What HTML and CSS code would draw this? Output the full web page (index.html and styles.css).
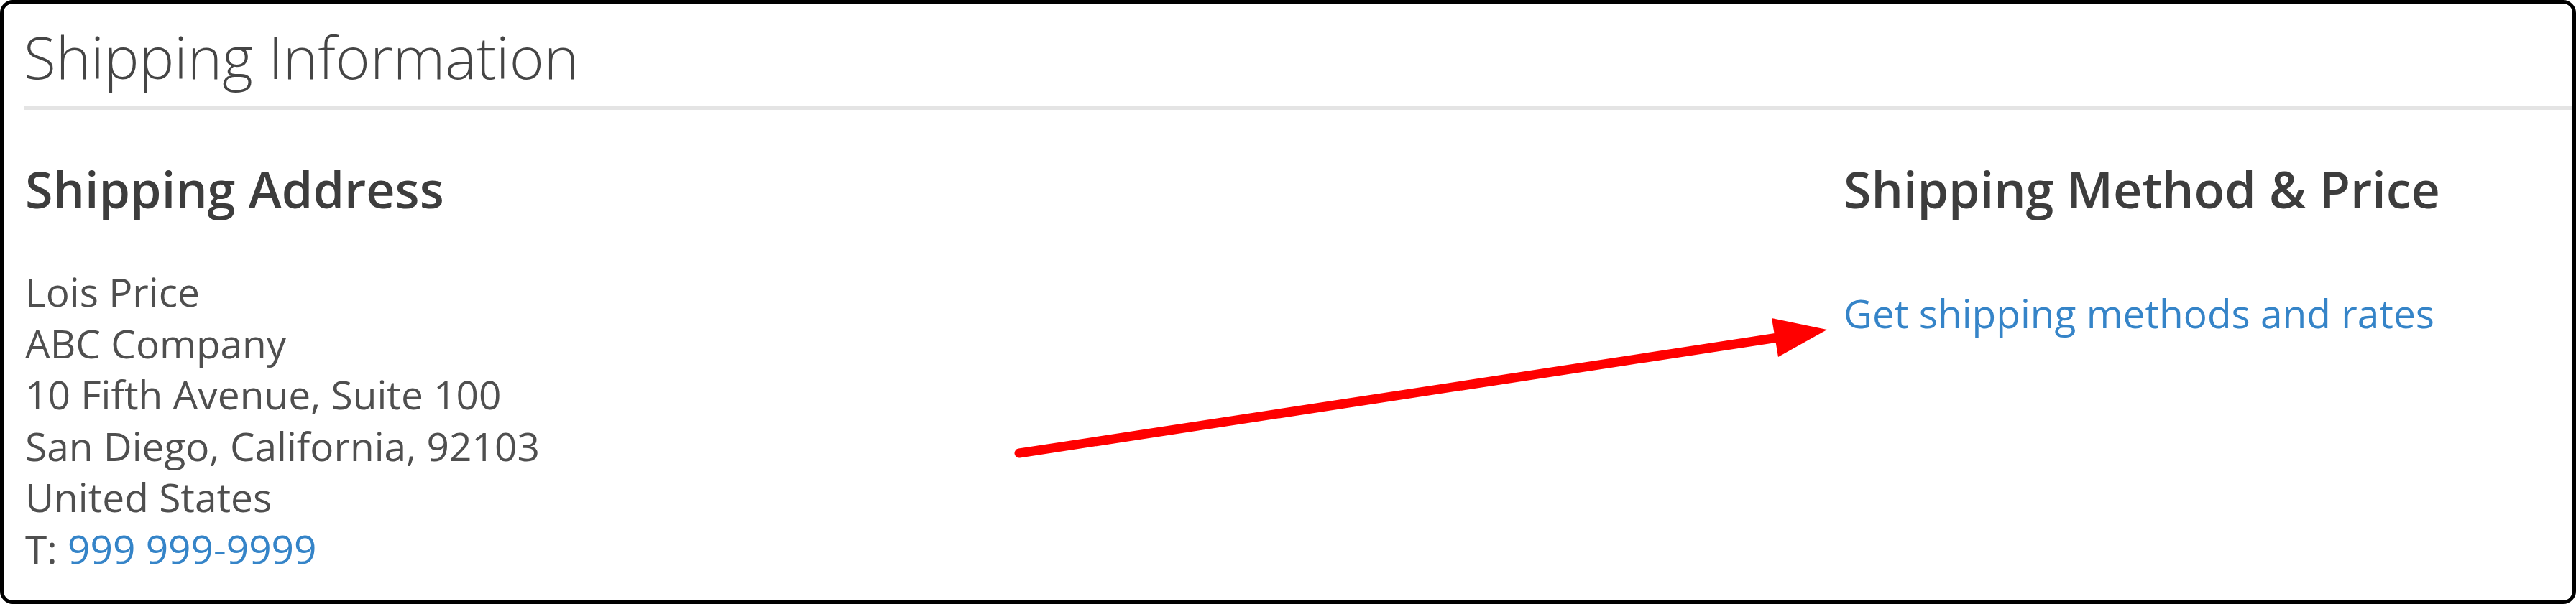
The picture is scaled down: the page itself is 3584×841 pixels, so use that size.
FILE: index.html
```html
<!DOCTYPE html>
<html lang="en">
<head>
    <meta charset="UTF-8">
    <meta name="viewport" content="width=device-width, initial-scale=1.0">
    <title>Shipping Information</title>
    <link rel="stylesheet" href="styles.css">
</head>
<body>
    <main class="moldura">
        <section class="secao">
            <h2 class="secao-titulo">Shipping Information</h2>
            <div class="secao-conteudo">
                <div class="item">
                    <h3 class="item-titulo">Shipping Address</h3>
                    <address class="endereco">
                        Lois Price<br>
                        ABC Company<br>
                        10 Fifth Avenue, Suite 100<br>
                        San Diego, California, 92103<br>
                        United States<br>
                        T: <a href="#">999 999-9999</a>
                    </address>
                </div>
                <div class="item">
                    <h3 class="item-titulo">Shipping Method &amp; Price</h3>
                    <div class="metodo">
                        <a href="#">Get shipping methods and rates</a>
                    </div>
                </div>
            </div>
        </section>
        <!-- seta vermelha desenhada por cima -->
        <svg class="seta" viewBox="0 0 3584 841" preserveAspectRatio="none">
            <line x1="1418" y1="631" x2="2480" y2="469" stroke="#ff0000" stroke-width="13" stroke-linecap="round" />
            <polygon points="2542,459 2465,443 2474,497" fill="#ff0000" />
        </svg>
    </main>
</body>
</html>
```

FILE: styles.css
```css
:root {
    --texto: #4f4f4f;
    --titulo: #3d3d3d;
    --link: #3584c8;
    --linha: #e4e4e4;
}

* {
    font-family: "Open Sans", "Liberation Sans", sans-serif;
    padding: 0px;
    margin: 0px;
    box-sizing: border-box;
}

html,
body {
    background-color: #ffffff;
    width: 100%;
    height: 100vh;
}

.moldura {
    position: relative;
    width: 100%;
    height: 100vh;
    border: 5px solid #000000;
    border-radius: 18px;
    background-color: #ffffff;
    overflow: hidden;
}

.secao-titulo {
    font-size: 82px;
    font-weight: 300;
    line-height: 94px;
    color: #454545;
    margin-left: 28px;
    padding-top: 26px;
    padding-bottom: 23px;
    border-bottom: 5px solid var(--linha);
}

.secao-conteudo {
    display: grid;
    grid-template-columns: 2530px 1fr;
    padding-left: 30px;
    padding-top: 68px;
}

.item-titulo {
    font-size: 70px;
    font-weight: 600;
    line-height: 84px;
    color: var(--titulo);
}

.endereco {
    font-style: normal;
    font-size: 55px;
    line-height: 71.6px;
    color: var(--texto);
    margin-top: 65px;
}

.metodo {
    font-size: 55px;
    line-height: 71.6px;
    margin-top: 95px;
}

a {
    color: var(--link);
    text-decoration: none;
}

.seta {
    position: absolute;
    top: -5px;
    left: -5px;
    width: 3584px;
    height: 841px;
    pointer-events: none;
}
```
